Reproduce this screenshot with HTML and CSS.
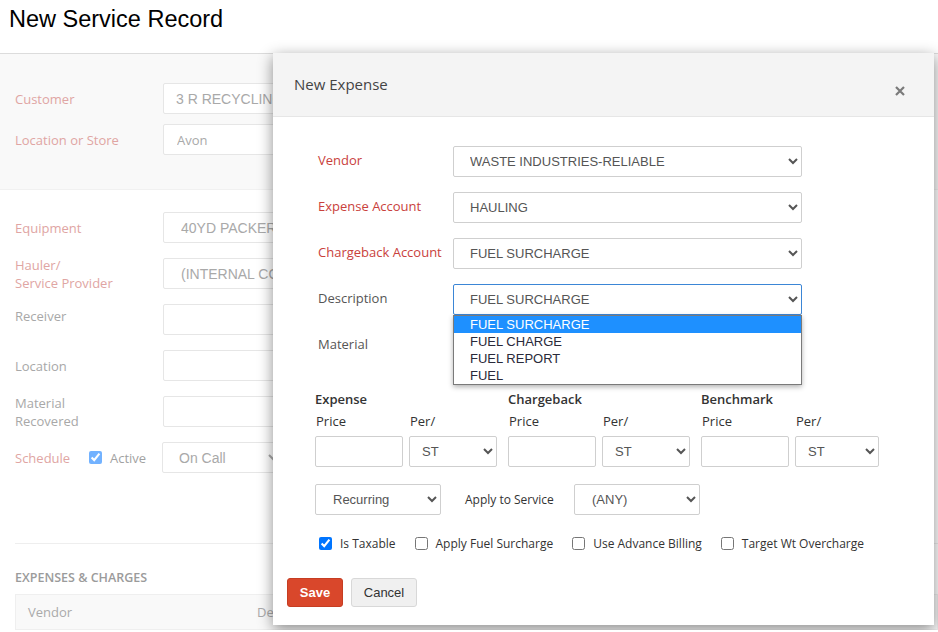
FILE: index.html
```html
<!DOCTYPE html>
<html lang="en">
<head>
    <meta charset="UTF-8">
    <title>New Service Record</title>
    <link rel="stylesheet" href="styles.css">
</head>
<body>
    <h1 class="page-title">New Service Record</h1>

    <section class="panel panel-gray">
        <div class="row">
            <label class="lbl req">Customer</label>
            <input class="ctl" type="text" value="3 R RECYCLING" readonly>
        </div>
        <div class="row">
            <label class="lbl req">Location or Store</label>
            <input class="ctl ctl-os" type="text" value="Avon" readonly>
        </div>
    </section>

    <section class="panel panel-main">
        <div class="row">
            <label class="lbl req">Equipment</label>
            <input class="ctl ctl-sel" type="text" value="40YD PACKER" readonly>
        </div>
        <div class="row">
            <label class="lbl req">Hauler/<br>Service Provider</label>
            <input class="ctl ctl-sel" type="text" value="(INTERNAL COMPANY)" readonly>
        </div>
        <div class="row">
            <label class="lbl lbl-receiver">Receiver</label>
            <input class="ctl" type="text">
        </div>
        <div class="row">
            <label class="lbl">Location</label>
            <input class="ctl" type="text">
        </div>
        <div class="row">
            <label class="lbl">Material<br>Recovered</label>
            <input class="ctl" type="text">
        </div>
        <div class="row row-schedule">
            <label class="lbl req sched-lbl">Schedule</label>
            <label class="active-chk"><input type="checkbox" checked><span>Active</span></label>
            <select class="ctl ctl-schedule">
                <option>On Call</option>
            </select>
        </div>
    </section>

    <section class="expenses">
        <h3 class="expenses-title">EXPENSES &amp; CHARGES</h3>
        <div class="table-head">
            <span class="col-vendor">Vendor</span>
            <span>Description</span>
        </div>
    </section>

    <div class="modal">
        <div class="modal-header">
            <h4 class="modal-title">New Expense</h4>
            <button class="close" type="button" aria-label="Close">
                <svg width="10" height="10" viewBox="0 0 10 10"><path d="M1 1L9 9M9 1L1 9" stroke="#7a7a7a" stroke-width="2.2" fill="none"/></svg>
            </button>
        </div>

        <div class="modal-body">
            <div class="field-list">
                <label class="field-lbl req-m">Vendor</label>
                <select class="sel"><option>WASTE INDUSTRIES-RELIABLE</option></select>

                <label class="field-lbl req-m">Expense Account</label>
                <select class="sel"><option>HAULING</option></select>

                <label class="field-lbl req-m">Chargeback Account</label>
                <select class="sel"><option>FUEL SURCHARGE</option></select>

                <label class="field-lbl">Description</label>
                <div class="sel-wrap">
                    <select class="sel sel-focus"><option>FUEL SURCHARGE</option></select>
                    <ul class="listbox">
                        <li class="selected">FUEL SURCHARGE</li>
                        <li>FUEL CHARGE</li>
                        <li>FUEL REPORT</li>
                        <li>FUEL</li>
                    </ul>
                </div>

                <label class="field-lbl">Material</label>
                <select class="sel"><option></option></select>
            </div>

            <div class="pricing">
                <div class="price-group">
                    <div class="group-title">Expense</div>
                    <span class="sub-lbl">Price</span>
                    <span class="sub-lbl">Per/</span>
                    <input class="num" type="text">
                    <select class="sel sel-per"><option>ST</option></select>
                </div>
                <div class="price-group">
                    <div class="group-title">Chargeback</div>
                    <span class="sub-lbl">Price</span>
                    <span class="sub-lbl">Per/</span>
                    <input class="num" type="text">
                    <select class="sel sel-per"><option>ST</option></select>
                </div>
                <div class="price-group">
                    <div class="group-title">Benchmark</div>
                    <span class="sub-lbl">Price</span>
                    <span class="sub-lbl">Per/</span>
                    <input class="num" type="text">
                    <select class="sel sel-per sel-per-last"><option>ST</option></select>
                </div>
            </div>

            <div class="apply-row">
                <select class="sel sel-small"><option>Recurring</option></select>
                <span class="apply-lbl">Apply to Service</span>
                <select class="sel sel-small"><option>(ANY)</option></select>
            </div>

            <div class="check-row">
                <label class="chk"><input type="checkbox" checked><span>Is Taxable</span></label>
                <label class="chk"><input type="checkbox"><span>Apply Fuel Surcharge</span></label>
                <label class="chk"><input type="checkbox"><span>Use Advance Billing</span></label>
                <label class="chk"><input type="checkbox"><span>Target Wt Overcharge</span></label>
            </div>
        </div>

        <div class="modal-footer">
            <button class="btn btn-save" type="button">Save</button>
            <button class="btn btn-cancel" type="button">Cancel</button>
        </div>
    </div>
</body>
</html>
```

FILE: styles.css
```css
* {
    box-sizing: border-box;
}

body {
    margin: 0;
    position: relative;
    font-family: "Open Sans", "Liberation Sans", sans-serif;
    font-size: 13px;
    color: #333;
    background: #fff;
    overflow: hidden;
}

.page-title {
    margin: 0;
    height: 54px;
    padding: 5px 9px 0;
    font-family: "Liberation Sans", Arial, sans-serif;
    font-size: 23.5px;
    font-weight: normal;
    line-height: 28px;
    color: #000;
    border-bottom: 1px solid #dcdcdc;
}

/* background form (faded behind the modal) */
.panel {
    display: flex;
    flex-direction: column;
    padding: 0 15px;
}

.panel-gray {
    background: #f9f9f9;
    padding-top: 29px;
    padding-bottom: 34px;
    gap: 10px;
    border-bottom: 1px solid #f1f1f1;
}

.panel-main {
    padding-top: 22px;
    gap: 15px;
}

.row {
    display: flex;
    align-items: center;
    height: 31px;
}

.lbl {
    width: 148px;
    flex: none;
    line-height: 18px;
    color: #a8a8a8;
}

.lbl.req {
    color: #e0a5a3;
}

.lbl-receiver {
    margin-top: -8px;
}

.ctl {
    width: 300px;
    height: 31px;
    padding: 0 12px;
    border: 1px solid #e6e6e6;
    border-radius: 2px;
    background: #fff;
    font-family: "Liberation Sans", Arial, sans-serif;
    font-size: 14px;
    color: #a9a9a9;
}

.ctl-os {
    font-family: "Open Sans", sans-serif;
    font-size: 13px;
    padding-left: 13px;
}

.ctl-sel {
    padding-left: 17px;
}

.sched-lbl {
    width: 70px;
}

.active-chk {
    display: flex;
    align-items: center;
    width: 77px;
    flex: none;
    color: #a8a8a8;
    opacity: 0.55;
}

.active-chk span {
    margin-left: 5px;
    color: #555;
}

.ctl-schedule {
    width: 120px;
    padding-left: 12px;
}

.expenses {
    margin: 70px 0 0 15px;
    border-top: 1px solid #eee;
}

.expenses-title {
    margin: 25px 0 7px;
    font-size: 12.5px;
    font-weight: 600;
    line-height: 18px;
    color: #9b9b9b;
}

.table-head {
    display: flex;
    height: 36px;
    align-items: center;
    padding-left: 12px;
    background: #f9f9f9;
    border: 1px solid #efefef;
    color: #aaa;
}

.col-vendor {
    width: 229px;
}

/* modal */
.modal {
    position: absolute;
    left: 273px;
    top: 53px;
    width: 661px;
    background: #fff;
    box-shadow: 0 4px 14px rgba(0, 0, 0, 0.45);
    padding-bottom: 18px;
    z-index: 10;
}

.modal-header {
    display: flex;
    align-items: center;
    justify-content: space-between;
    height: 64px;
    padding: 0 29px 0 21px;
    background: #f4f4f4;
    border-bottom: 1px solid #e6e6e6;
}

.modal-title {
    margin: 0 0 2px;
    font-size: 15px;
    font-weight: normal;
    color: #444;
}

.close {
    margin-top: 12px;
    padding: 0;
    border: none;
    background: none;
    line-height: 0;
}

.modal-body {
    padding: 29px 42px 0;
}

.field-list {
    display: grid;
    grid-template-columns: 135px 349px;
    grid-auto-rows: 31px;
    row-gap: 15px;
    align-items: center;
    padding-left: 3px;
}

.field-lbl {
    color: #555;
    margin-top: -3px;
}

.field-lbl.req-m {
    color: #c9413c;
}

.sel {
    height: 31px;
    padding: 0 8px 0 12px;
    border: 1px solid #cfcfcf;
    border-radius: 2px;
    background-color: #fff;
    font-family: "Liberation Sans", Arial, sans-serif;
    font-size: 13px;
    color: #555;
}

.field-list .sel {
    width: 349px;
}

.sel-focus {
    border-color: #3b86d6;
    outline: none;
}

.sel-wrap {
    position: relative;
    height: 31px;
}

.listbox {
    position: absolute;
    left: 0;
    top: 31px;
    width: 349px;
    margin: 0;
    padding: 0;
    list-style: none;
    background: #fff;
    border: 1px solid #7a7a7a;
    box-shadow: 0 2px 5px rgba(0, 0, 0, 0.3);
    font-family: "Liberation Sans", Arial, sans-serif;
    font-size: 13px;
    line-height: 17px;
    color: #2a2a3a;
    z-index: 5;
}

.listbox li {
    padding-left: 16px;
}

.listbox li.selected {
    background: #1e90ff;
    color: #fff;
}

.pricing {
    display: flex;
    gap: 11px;
    margin-top: 29px;
}

.price-group {
    display: grid;
    grid-template-columns: 88px 88px;
    column-gap: 6px;
}

.group-title {
    grid-column: 1 / 3;
    font-weight: 600;
    line-height: 18px;
    color: #333;
}

.sub-lbl {
    margin-top: 4px;
    margin-bottom: 6px;
    line-height: 18px;
    padding-left: 1px;
}

.num {
    height: 31px;
    border: 1px solid #cfcfcf;
    border-radius: 2px;
}

.sel-per {
    width: 88px;
    padding-left: 8px;
}

.sel-per-last {
    width: 84px;
}

.apply-row {
    display: grid;
    grid-template-columns: 126px 133px 126px;
    align-items: center;
    margin-top: 17px;
}

.sel-small {
    width: 126px;
    padding-left: 13px;
}

.apply-lbl {
    padding-left: 24px;
    font-size: 12px;
}

.check-row {
    display: flex;
    gap: 15px;
    margin-top: 19px;
    height: 18px;
    align-items: center;
    font-size: 12px;
}

.chk {
    display: flex;
    align-items: center;
}

.chk span {
    margin-left: 5px;
}

.modal-footer {
    display: flex;
    gap: 8px;
    margin-top: 26px;
    padding: 0 14px;
}

.btn {
    height: 29px;
    border-radius: 3px;
    font-family: "Liberation Sans", Arial, sans-serif;
    font-size: 13px;
    cursor: pointer;
}

.btn-save {
    width: 56px;
    border: 1px solid #c63d22;
    background: #d9472b;
    color: #fff;
    font-weight: bold;
}

.btn-cancel {
    width: 66px;
    border: 1px solid #d8d8d8;
    background: #f0f0f0;
    color: #333;
}
```
